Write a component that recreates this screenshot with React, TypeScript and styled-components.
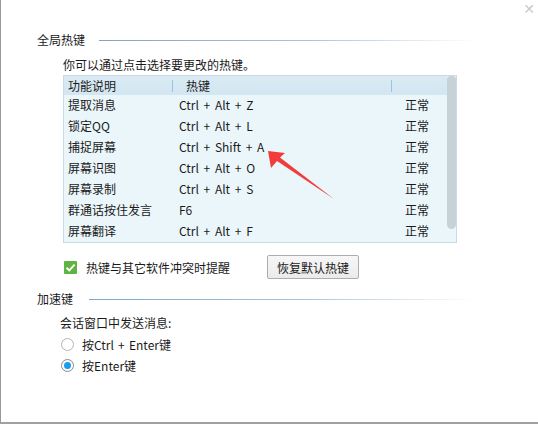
import styled, { createGlobalStyle } from "styled-components";

const GlobalStyle = createGlobalStyle`
  html, body {
    margin: 0;
    padding: 0;
    background: #ffffff;
  }
  body {
    font-family: "Noto Sans CJK SC", "Noto Sans", sans-serif;
    font-size: 12px;
    color: #1a1a1a;
  }
`;

const Window = styled.div`
  position: relative;
  box-sizing: border-box;
  width: 538px;
  height: 424px;
  background: #ffffff;
  border-left: 1px solid #9a9a9a;
  border-bottom: 2px solid #a0a0a0;
  padding: 32px 61px 0 36px;
`;

const CloseButton = styled.span`
  position: absolute;
  top: 1px;
  right: 3px;
  color: #cacaca;
  font-family: "DejaVu Sans", sans-serif;
  font-size: 14px;
  line-height: 16px;
`;

const SectionTitle = styled.div`
  display: flex;
  align-items: center;
  height: 16px;
  line-height: 16px;
`;

const TitleLine = styled.div<{ $gap: number }>`
  flex: 1;
  height: 1px;
  margin-left: ${(p) => p.$gap}px;
  background: linear-gradient(to right, #7ea6c6 0%, #a9c4da 55%, rgba(220, 232, 242, 0) 100%);
`;

const SectionBody = styled.div`
  padding-left: 26px;
`;

const Hint = styled.div`
  margin-top: 9px;
  line-height: 16px;
`;

const Table = styled.div`
  display: flex;
  width: 394px;
  margin-top: 2px;
  box-sizing: border-box;
  border: 1px solid #c7dae5;
  background: #ebf6fb;
`;

const Grid = styled.div`
  flex: 1;
  display: grid;
  grid-template-columns: 108px 219px 1fr;
`;

const HeadCell = styled.div<{ $pad: number; $sep?: boolean }>`
  height: 19px;
  line-height: 19px;
  padding-left: ${(p) => p.$pad}px;
  background: linear-gradient(#d9eaf4, #d3e6f1);
  position: relative;
  ${(p) =>
    p.$sep &&
    `
    &::before {
      content: "";
      position: absolute;
      left: 0;
      top: 4px;
      height: 12px;
      width: 1px;
      background: #9cc4de;
    }
  `}
`;

const Cell = styled.div<{ $pad: number; $keys?: boolean }>`
  height: 21px;
  line-height: 20px;
  padding-left: ${(p) => p.$pad}px;
  white-space: nowrap;
  word-spacing: ${(p) => (p.$keys ? "2px" : "normal")};
`;

const Track = styled.div`
  width: 9px;
`;

const Thumb = styled.div`
  height: 153px;
  border-radius: 4px 4px 5px 5px;
  background: #c7d1d8;
`;

const OptionRow = styled.div`
  display: flex;
  align-items: center;
  margin-top: 12px;
  height: 24px;
`;

const CheckLabel = styled.label`
  display: flex;
  align-items: center;
  gap: 9px;
  margin-left: 1px;
  width: 203px;
`;

const CheckBox = styled.span`
  width: 13px;
  height: 13px;
  background: #5db443;
  border-radius: 1px;
  display: inline-flex;
  align-items: center;
  justify-content: center;
`;

const Button = styled.button`
  width: 92px;
  height: 24px;
  box-sizing: border-box;
  border: 1px solid #adadad;
  border-radius: 2px;
  background: linear-gradient(#f7f7f7, #ebebeb);
  font-family: inherit;
  font-size: 12px;
  color: #1a1a1a;
  padding: 0;
`;

const SecondSection = styled.div`
  margin-top: 12px;
`;

const SubLabel = styled.div`
  margin-top: 8px;
  margin-left: -3px;
  line-height: 16px;
`;

const Radio = styled.label`
  display: flex;
  align-items: center;
  gap: 8px;
  margin-left: -2px;
  height: 16px;
  margin-top: 5px;
  word-spacing: 1.5px;
`;

const RadioDot = styled.span<{ $on?: boolean }>`
  width: 11px;
  height: 11px;
  border-radius: 50%;
  border: 1px solid ${(p) => (p.$on ? "#8a8a8a" : "#b4b4b4")};
  background: #ffffff;
  display: inline-flex;
  align-items: center;
  justify-content: center;
  &::after {
    content: "";
    width: 7px;
    height: 7px;
    border-radius: 50%;
    background: ${(p) => (p.$on ? "#1a9cf0" : "transparent")};
  }
`;

const Arrow = styled.svg`
  position: absolute;
  left: 0;
  top: 0;
  pointer-events: none;
`;

const rows: [string, string][] = [
  ["提取消息", "Ctrl + Alt + Z"],
  ["锁定QQ", "Ctrl + Alt + L"],
  ["捕捉屏幕", "Ctrl + Shift + A"],
  ["屏幕识图", "Ctrl + Alt + O"],
  ["屏幕录制", "Ctrl + Alt + S"],
  ["群通话按住发言", "F6"],
  ["屏幕翻译", "Ctrl + Alt + F"],
];

export default function App() {
  return (
    <>
      <GlobalStyle />
      <Window>
        <CloseButton>✕</CloseButton>

        <SectionTitle>
          <span>全局热键</span>
          <TitleLine $gap={14} />
        </SectionTitle>
        <SectionBody>
          <Hint>你可以通过点击选择要更改的热键。</Hint>
          <Table>
            <Grid>
              <HeadCell $pad={4}>功能说明</HeadCell>
              <HeadCell $pad={14} $sep>
                热键
              </HeadCell>
              <HeadCell $pad={0} $sep />
              {rows.flatMap(([name, key]) => [
                <Cell key={name} $pad={4}>
                  {name}
                </Cell>,
                <Cell key={name + "k"} $pad={7} $keys>
                  {key}
                </Cell>,
                <Cell key={name + "s"} $pad={14}>
                  正常
                </Cell>,
              ])}
            </Grid>
            <Track>
              <Thumb />
            </Track>
          </Table>
          <OptionRow>
            <CheckLabel>
              <CheckBox>
                <svg width="11" height="11" viewBox="0 0 11 11">
                  <path d="M1.5 5.8 L4.3 8.5 L9.6 2.6" fill="none" stroke="#fff" strokeWidth="1.9" />
                </svg>
              </CheckBox>
              热键与其它软件冲突时提醒
            </CheckLabel>
            <Button>恢复默认热键</Button>
          </OptionRow>
        </SectionBody>

        <SecondSection>
          <SectionTitle>
            <span>加速键</span>
            <TitleLine $gap={16} />
          </SectionTitle>
          <SectionBody>
            <SubLabel>会话窗口中发送消息:</SubLabel>
            <Radio>
              <RadioDot />
              按Ctrl + Enter键
            </Radio>
            <Radio>
              <RadioDot $on />
              按Enter键
            </Radio>
          </SectionBody>
        </SecondSection>

        <Arrow width="538" height="424" viewBox="0 0 538 424">
          <polygon
            points="267,151 284,153 279,157.5 333,199 276,161 270,168"
            fill="#f23b3b"
          />
        </Arrow>
      </Window>
    </>
  );
}
